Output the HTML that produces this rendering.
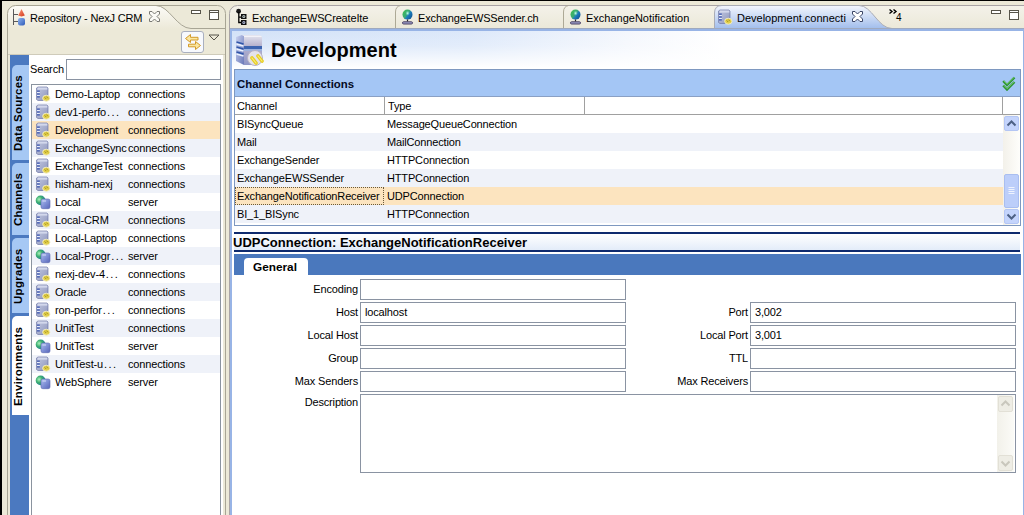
<!DOCTYPE html>
<html><head><meta charset="utf-8">
<style>
*{box-sizing:border-box;margin:0;padding:0}
html,body{width:1024px;height:515px;overflow:hidden;background:#ECE9D8;font-family:"Liberation Sans",sans-serif;font-size:11px;color:#000}
.a{position:absolute}
.t{position:absolute;white-space:nowrap;line-height:13px;letter-spacing:-0.15px}
.b{font-weight:bold}
.inp{position:absolute;border:1px solid #8A93A2;background:#fff;height:21px}
.lbl{position:absolute;white-space:nowrap;line-height:13px;letter-spacing:-0.15px;text-align:right}
.vt{position:absolute;white-space:nowrap;line-height:13px;font-weight:bold;transform-origin:0 0;transform:rotate(-90deg)}
</style></head><body>
<!-- black frame -->
<div class="a" style="left:0;top:0;width:1024px;height:1px;background:#000"></div>
<div class="a" style="left:0;top:0;width:2px;height:515px;background:#000"></div>

<!-- ========== LEFT PANEL ========== -->
<svg class="a" style="left:7px;top:5px" width="219" height="510">
 <defs><linearGradient id="g1" x1="0" y1="0" x2="0" y2="1"><stop offset="0" stop-color="#FCFBF7"/><stop offset="1" stop-color="#ECE9D8"/></linearGradient></defs>
 <path d="M0.5,510 V8.5 A8,8 0 0 1 8.5,0.5 H210.5 A8,8 0 0 1 218.5,8.5 V510" fill="#ECE9D8"/>
 <path d="M1,24 V8.5 A7.5,7.5 0 0 1 8.5,1 H149 C162,1 170,23 184,23 H184 V24 Z" fill="url(#g1)"/>
 <path d="M0.5,510 V8.5 A8,8 0 0 1 8.5,0.5 H210.5 A8,8 0 0 1 218.5,8.5 V510" fill="none" stroke="#A8A595" stroke-width="1"/>
 <path d="M149,0.5 C162,0.5 170,23.5 184,23.5 H218" fill="none" stroke="#A8A595" stroke-width="1"/>
</svg>
<div class="a" style="left:8px;top:54px;width:217px;height:1px;background:#CFCBBA"></div>
<!-- view icon -->
<svg class="a" style="left:12px;top:8px" width="16" height="18">
 <defs><linearGradient id="gr" x1="0" y1="0" x2="1" y2="1"><stop offset="0" stop-color="#FF9A7A"/><stop offset="1" stop-color="#D23A1E"/></linearGradient>
 <linearGradient id="gb" x1="0" y1="0" x2="1" y2="1"><stop offset="0" stop-color="#8FB4F0"/><stop offset="1" stop-color="#2F5BB8"/></linearGradient></defs>
 <path d="M1.5,1 V17 M1.5,6.5 H6 M1.5,13.5 H6" stroke="#5A5A5A" stroke-width="1" fill="none"/>
 <path d="M9.5,1 L12.8,7.6 Q9.5,9.2 6.2,7.6 Z" fill="url(#gr)"/>
 <rect x="6" y="10" width="7" height="7.5" rx="2" fill="url(#gb)"/>
</svg>
<div class="t" style="left:30px;top:12px">Repository - NexJ CRM</div>
<!-- close X outline -->
<svg class="a" style="left:149px;top:11px" width="11" height="11">
 <path d="M0.5,0.5 H3 L5.5,3 L8,0.5 H10.5 V3 L8,5.5 L10.5,8 V10.5 H8 L5.5,8 L3,10.5 H0.5 V8 L3,5.5 L0.5,3 Z" fill="#FAFAF6" stroke="#7A7A74" stroke-width="1"/>
</svg>
<!-- min / max -->
<div class="a" style="left:191px;top:10px;width:10px;height:4px;border:1px solid #57544A;background:#fff"></div>
<div class="a" style="left:209px;top:10px;width:10px;height:10px;border:1px solid #57544A;background:#fff"></div><div class="a" style="left:210px;top:12px;width:8px;height:1px;background:#57544A"></div>
<!-- toolbar sync button -->
<div class="a" style="left:181px;top:31px;width:23px;height:22px;border:1px solid #A9AFBF;border-radius:3px;background:#F7F9FD"></div>
<svg class="a" style="left:181px;top:31px" width="23" height="22">
 <path d="M4.5,7.5 L9.5,3.5 V6.3 H17 V9 H9.5 V11.5 Z" fill="#FBE7A0" stroke="#D39A2A" stroke-width="1" stroke-linejoin="round"/>
 <path d="M19.5,14.5 L14.5,10.5 V13.2 H7.5 V15.8 H14.5 V18.5 Z" fill="#FBE7A0" stroke="#D39A2A" stroke-width="1" stroke-linejoin="round"/>
</svg>
<svg class="a" style="left:208px;top:34px" width="12" height="7">
 <path d="M1,1 H11 L6,6 Z" fill="none" stroke="#57544A" stroke-width="1"/>
</svg>

<!-- vertical tabs strip -->
<div class="a" style="left:10px;top:55px;width:19px;height:460px;background:#4B79C0"></div>
<div class="a" style="left:12px;top:65px;width:17px;height:95px;background:#A6C8F4;border-radius:5px 0 0 0"></div>
<div class="a" style="left:12px;top:163px;width:17px;height:72px;background:#A6C8F4;border-radius:5px 0 0 0"></div>
<div class="a" style="left:12px;top:238px;width:17px;height:75px;background:#A6C8F4;border-radius:5px 0 0 0"></div>
<div class="a" style="left:12px;top:316px;width:17px;height:99px;background:#fff;border-radius:5px 0 0 0"></div>
<div class="vt" style="left:12px;top:151px;font-size:11.5px;letter-spacing:0.2px">Data Sources</div>
<div class="vt" style="left:12px;top:226px;font-size:11.5px;letter-spacing:0.15px">Channels</div>
<div class="vt" style="left:12px;top:304px;font-size:11.5px;letter-spacing:0.3px">Upgrades</div>
<div class="vt" style="left:12px;top:406px;font-size:11.5px;letter-spacing:0.2px">Environments</div>

<!-- white content -->
<div class="a" style="left:29px;top:55px;width:194px;height:460px;background:#fff"></div>
<div class="t" style="left:30px;top:63px">Search</div>
<div class="inp" style="left:66px;top:59px;width:155px"></div>
<div class="a" style="left:31px;top:84px;width:190px;height:431px;border:1px solid #8A939F;border-bottom:none;background:#fff"></div>
<svg class="a" width="0" height="0" style="left:0;top:0"><defs><radialGradient id="gs1" cx="0.35" cy="0.4" r="0.7"><stop offset="0" stop-color="#A8F2B8"/><stop offset="0.45" stop-color="#3DAE72"/><stop offset="0.8" stop-color="#2A8C8C"/><stop offset="1" stop-color="#1E6F78"/></radialGradient><linearGradient id="gdb" x1="0" y1="0" x2="1" y2="1"><stop offset="0" stop-color="#C2C8E0"/><stop offset="0.6" stop-color="#A3AACB"/><stop offset="1" stop-color="#8088B6"/></linearGradient><linearGradient id="ggl" x1="0.1" y1="0.2" x2="0.9" y2="0.8"><stop offset="0" stop-color="#3DBA5A"/><stop offset="0.45" stop-color="#38A878"/><stop offset="0.6" stop-color="#1D7EBE"/><stop offset="1" stop-color="#125A98"/></linearGradient><radialGradient id="gglh" cx="0.5" cy="0.5" r="0.5"><stop offset="0" stop-color="#C8FFF4" stop-opacity="1"/><stop offset="1" stop-color="#80E0D0" stop-opacity="0"/></radialGradient><linearGradient id="gs2" x1="0" y1="0" x2="1" y2="1"><stop offset="0" stop-color="#B3C0F0"/><stop offset="0.5" stop-color="#7F90D6"/><stop offset="1" stop-color="#5865B8"/></linearGradient></defs></svg>
<div class="a" style="left:32px;top:85px;width:188px;height:18px;background:#fff"></div>
<svg class="a" style="left:35px;top:86px" width="16" height="16" viewBox="0 0 16 16">
<path d="M1.5,2 L3,1 H12 L13,2 V12 L11,14.5 H3 L1.5,13.5 Z" fill="url(#gdb)" stroke="#7078A8" stroke-width="0.7"/>
<path d="M3,1.6 H12.3 V3.6 H3 Z" fill="#D3D8EC"/>
<path d="M2,5.2 H4.8 M2,8 H4.8 M2,10.8 H4.8" stroke="#3A55B0" stroke-width="1.3"/>
<path d="M2,6.6 H4.8 M2,9.4 H4.8" stroke="#EEF2FF" stroke-width="1"/>
<ellipse cx="11.3" cy="12.2" rx="3.7" ry="3" fill="#E2CF4A" stroke="#F2EDC8" stroke-width="0.9"/>
<path d="M9.6,11.3 L11.2,13 M11.4,10.6 L13,12.3" stroke="#9C8A1C" stroke-width="0.9"/>
</svg>
<div class="t" style="left:55px;top:88px;">Demo-Laptop</div>
<div class="t" style="left:128px;top:88px;">connections</div>
<div class="a" style="left:32px;top:103px;width:188px;height:18px;background:#EFF2F9"></div>
<svg class="a" style="left:35px;top:104px" width="16" height="16" viewBox="0 0 16 16">
<path d="M1.5,2 L3,1 H12 L13,2 V12 L11,14.5 H3 L1.5,13.5 Z" fill="url(#gdb)" stroke="#7078A8" stroke-width="0.7"/>
<path d="M3,1.6 H12.3 V3.6 H3 Z" fill="#D3D8EC"/>
<path d="M2,5.2 H4.8 M2,8 H4.8 M2,10.8 H4.8" stroke="#3A55B0" stroke-width="1.3"/>
<path d="M2,6.6 H4.8 M2,9.4 H4.8" stroke="#EEF2FF" stroke-width="1"/>
<ellipse cx="11.3" cy="12.2" rx="3.7" ry="3" fill="#E2CF4A" stroke="#F2EDC8" stroke-width="0.9"/>
<path d="M9.6,11.3 L11.2,13 M11.4,10.6 L13,12.3" stroke="#9C8A1C" stroke-width="0.9"/>
</svg>
<div class="t" style="left:55px;top:106px;">dev1-perfo<span style="letter-spacing:1.4px;margin-left:1px">...</span></div>
<div class="t" style="left:128px;top:106px;">connections</div>
<div class="a" style="left:32px;top:121px;width:188px;height:18px;background:#FCE4BF"></div>
<svg class="a" style="left:35px;top:122px" width="16" height="16" viewBox="0 0 16 16">
<path d="M1.5,2 L3,1 H12 L13,2 V12 L11,14.5 H3 L1.5,13.5 Z" fill="url(#gdb)" stroke="#7078A8" stroke-width="0.7"/>
<path d="M3,1.6 H12.3 V3.6 H3 Z" fill="#D3D8EC"/>
<path d="M2,5.2 H4.8 M2,8 H4.8 M2,10.8 H4.8" stroke="#3A55B0" stroke-width="1.3"/>
<path d="M2,6.6 H4.8 M2,9.4 H4.8" stroke="#EEF2FF" stroke-width="1"/>
<ellipse cx="11.3" cy="12.2" rx="3.7" ry="3" fill="#E2CF4A" stroke="#F2EDC8" stroke-width="0.9"/>
<path d="M9.6,11.3 L11.2,13 M11.4,10.6 L13,12.3" stroke="#9C8A1C" stroke-width="0.9"/>
</svg>
<div class="t" style="left:55px;top:124px;">Development</div>
<div class="t" style="left:128px;top:124px;">connections</div>
<div class="a" style="left:32px;top:139px;width:188px;height:18px;background:#EFF2F9"></div>
<svg class="a" style="left:35px;top:140px" width="16" height="16" viewBox="0 0 16 16">
<path d="M1.5,2 L3,1 H12 L13,2 V12 L11,14.5 H3 L1.5,13.5 Z" fill="url(#gdb)" stroke="#7078A8" stroke-width="0.7"/>
<path d="M3,1.6 H12.3 V3.6 H3 Z" fill="#D3D8EC"/>
<path d="M2,5.2 H4.8 M2,8 H4.8 M2,10.8 H4.8" stroke="#3A55B0" stroke-width="1.3"/>
<path d="M2,6.6 H4.8 M2,9.4 H4.8" stroke="#EEF2FF" stroke-width="1"/>
<ellipse cx="11.3" cy="12.2" rx="3.7" ry="3" fill="#E2CF4A" stroke="#F2EDC8" stroke-width="0.9"/>
<path d="M9.6,11.3 L11.2,13 M11.4,10.6 L13,12.3" stroke="#9C8A1C" stroke-width="0.9"/>
</svg>
<div class="t" style="left:55px;top:142px;">ExchangeSync</div>
<div class="t" style="left:128px;top:142px;">connections</div>
<div class="a" style="left:32px;top:157px;width:188px;height:18px;background:#fff"></div>
<svg class="a" style="left:35px;top:158px" width="16" height="16" viewBox="0 0 16 16">
<path d="M1.5,2 L3,1 H12 L13,2 V12 L11,14.5 H3 L1.5,13.5 Z" fill="url(#gdb)" stroke="#7078A8" stroke-width="0.7"/>
<path d="M3,1.6 H12.3 V3.6 H3 Z" fill="#D3D8EC"/>
<path d="M2,5.2 H4.8 M2,8 H4.8 M2,10.8 H4.8" stroke="#3A55B0" stroke-width="1.3"/>
<path d="M2,6.6 H4.8 M2,9.4 H4.8" stroke="#EEF2FF" stroke-width="1"/>
<ellipse cx="11.3" cy="12.2" rx="3.7" ry="3" fill="#E2CF4A" stroke="#F2EDC8" stroke-width="0.9"/>
<path d="M9.6,11.3 L11.2,13 M11.4,10.6 L13,12.3" stroke="#9C8A1C" stroke-width="0.9"/>
</svg>
<div class="t" style="left:55px;top:160px;">ExchangeTest</div>
<div class="t" style="left:128px;top:160px;">connections</div>
<div class="a" style="left:32px;top:175px;width:188px;height:18px;background:#EFF2F9"></div>
<svg class="a" style="left:35px;top:176px" width="16" height="16" viewBox="0 0 16 16">
<path d="M1.5,2 L3,1 H12 L13,2 V12 L11,14.5 H3 L1.5,13.5 Z" fill="url(#gdb)" stroke="#7078A8" stroke-width="0.7"/>
<path d="M3,1.6 H12.3 V3.6 H3 Z" fill="#D3D8EC"/>
<path d="M2,5.2 H4.8 M2,8 H4.8 M2,10.8 H4.8" stroke="#3A55B0" stroke-width="1.3"/>
<path d="M2,6.6 H4.8 M2,9.4 H4.8" stroke="#EEF2FF" stroke-width="1"/>
<ellipse cx="11.3" cy="12.2" rx="3.7" ry="3" fill="#E2CF4A" stroke="#F2EDC8" stroke-width="0.9"/>
<path d="M9.6,11.3 L11.2,13 M11.4,10.6 L13,12.3" stroke="#9C8A1C" stroke-width="0.9"/>
</svg>
<div class="t" style="left:55px;top:178px;">hisham-nexj</div>
<div class="t" style="left:128px;top:178px;">connections</div>
<div class="a" style="left:32px;top:193px;width:188px;height:18px;background:#fff"></div>
<svg class="a" style="left:35px;top:194px" width="16" height="16" viewBox="0 0 16 16">
<circle cx="5.6" cy="6.4" r="4.9" fill="url(#gs1)"/>
<rect x="6" y="5" width="9" height="9.7" rx="1.8" fill="url(#gs2)" stroke="#5A68B0" stroke-width="0.6"/>
<path d="M7.5,7 H11" stroke="#E6ECFF" stroke-width="1" opacity="0.8"/>
</svg>
<div class="t" style="left:55px;top:196px;">Local</div>
<div class="t" style="left:128px;top:196px;">server</div>
<div class="a" style="left:32px;top:211px;width:188px;height:18px;background:#EFF2F9"></div>
<svg class="a" style="left:35px;top:212px" width="16" height="16" viewBox="0 0 16 16">
<path d="M1.5,2 L3,1 H12 L13,2 V12 L11,14.5 H3 L1.5,13.5 Z" fill="url(#gdb)" stroke="#7078A8" stroke-width="0.7"/>
<path d="M3,1.6 H12.3 V3.6 H3 Z" fill="#D3D8EC"/>
<path d="M2,5.2 H4.8 M2,8 H4.8 M2,10.8 H4.8" stroke="#3A55B0" stroke-width="1.3"/>
<path d="M2,6.6 H4.8 M2,9.4 H4.8" stroke="#EEF2FF" stroke-width="1"/>
<ellipse cx="11.3" cy="12.2" rx="3.7" ry="3" fill="#E2CF4A" stroke="#F2EDC8" stroke-width="0.9"/>
<path d="M9.6,11.3 L11.2,13 M11.4,10.6 L13,12.3" stroke="#9C8A1C" stroke-width="0.9"/>
</svg>
<div class="t" style="left:55px;top:214px;">Local-CRM</div>
<div class="t" style="left:128px;top:214px;">connections</div>
<div class="a" style="left:32px;top:229px;width:188px;height:18px;background:#fff"></div>
<svg class="a" style="left:35px;top:230px" width="16" height="16" viewBox="0 0 16 16">
<path d="M1.5,2 L3,1 H12 L13,2 V12 L11,14.5 H3 L1.5,13.5 Z" fill="url(#gdb)" stroke="#7078A8" stroke-width="0.7"/>
<path d="M3,1.6 H12.3 V3.6 H3 Z" fill="#D3D8EC"/>
<path d="M2,5.2 H4.8 M2,8 H4.8 M2,10.8 H4.8" stroke="#3A55B0" stroke-width="1.3"/>
<path d="M2,6.6 H4.8 M2,9.4 H4.8" stroke="#EEF2FF" stroke-width="1"/>
<ellipse cx="11.3" cy="12.2" rx="3.7" ry="3" fill="#E2CF4A" stroke="#F2EDC8" stroke-width="0.9"/>
<path d="M9.6,11.3 L11.2,13 M11.4,10.6 L13,12.3" stroke="#9C8A1C" stroke-width="0.9"/>
</svg>
<div class="t" style="left:55px;top:232px;">Local-Laptop</div>
<div class="t" style="left:128px;top:232px;">connections</div>
<div class="a" style="left:32px;top:247px;width:188px;height:18px;background:#EFF2F9"></div>
<svg class="a" style="left:35px;top:248px" width="16" height="16" viewBox="0 0 16 16">
<circle cx="5.6" cy="6.4" r="4.9" fill="url(#gs1)"/>
<rect x="6" y="5" width="9" height="9.7" rx="1.8" fill="url(#gs2)" stroke="#5A68B0" stroke-width="0.6"/>
<path d="M7.5,7 H11" stroke="#E6ECFF" stroke-width="1" opacity="0.8"/>
</svg>
<div class="t" style="left:55px;top:250px;">Local-Progr<span style="letter-spacing:1.4px;margin-left:1px">...</span></div>
<div class="t" style="left:128px;top:250px;">server</div>
<div class="a" style="left:32px;top:265px;width:188px;height:18px;background:#fff"></div>
<svg class="a" style="left:35px;top:266px" width="16" height="16" viewBox="0 0 16 16">
<path d="M1.5,2 L3,1 H12 L13,2 V12 L11,14.5 H3 L1.5,13.5 Z" fill="url(#gdb)" stroke="#7078A8" stroke-width="0.7"/>
<path d="M3,1.6 H12.3 V3.6 H3 Z" fill="#D3D8EC"/>
<path d="M2,5.2 H4.8 M2,8 H4.8 M2,10.8 H4.8" stroke="#3A55B0" stroke-width="1.3"/>
<path d="M2,6.6 H4.8 M2,9.4 H4.8" stroke="#EEF2FF" stroke-width="1"/>
<ellipse cx="11.3" cy="12.2" rx="3.7" ry="3" fill="#E2CF4A" stroke="#F2EDC8" stroke-width="0.9"/>
<path d="M9.6,11.3 L11.2,13 M11.4,10.6 L13,12.3" stroke="#9C8A1C" stroke-width="0.9"/>
</svg>
<div class="t" style="left:55px;top:268px;">nexj-dev-4<span style="letter-spacing:1.4px;margin-left:1px">...</span></div>
<div class="t" style="left:128px;top:268px;">connections</div>
<div class="a" style="left:32px;top:283px;width:188px;height:18px;background:#EFF2F9"></div>
<svg class="a" style="left:35px;top:284px" width="16" height="16" viewBox="0 0 16 16">
<path d="M1.5,2 L3,1 H12 L13,2 V12 L11,14.5 H3 L1.5,13.5 Z" fill="url(#gdb)" stroke="#7078A8" stroke-width="0.7"/>
<path d="M3,1.6 H12.3 V3.6 H3 Z" fill="#D3D8EC"/>
<path d="M2,5.2 H4.8 M2,8 H4.8 M2,10.8 H4.8" stroke="#3A55B0" stroke-width="1.3"/>
<path d="M2,6.6 H4.8 M2,9.4 H4.8" stroke="#EEF2FF" stroke-width="1"/>
<ellipse cx="11.3" cy="12.2" rx="3.7" ry="3" fill="#E2CF4A" stroke="#F2EDC8" stroke-width="0.9"/>
<path d="M9.6,11.3 L11.2,13 M11.4,10.6 L13,12.3" stroke="#9C8A1C" stroke-width="0.9"/>
</svg>
<div class="t" style="left:55px;top:286px;">Oracle</div>
<div class="t" style="left:128px;top:286px;">connections</div>
<div class="a" style="left:32px;top:301px;width:188px;height:18px;background:#fff"></div>
<svg class="a" style="left:35px;top:302px" width="16" height="16" viewBox="0 0 16 16">
<path d="M1.5,2 L3,1 H12 L13,2 V12 L11,14.5 H3 L1.5,13.5 Z" fill="url(#gdb)" stroke="#7078A8" stroke-width="0.7"/>
<path d="M3,1.6 H12.3 V3.6 H3 Z" fill="#D3D8EC"/>
<path d="M2,5.2 H4.8 M2,8 H4.8 M2,10.8 H4.8" stroke="#3A55B0" stroke-width="1.3"/>
<path d="M2,6.6 H4.8 M2,9.4 H4.8" stroke="#EEF2FF" stroke-width="1"/>
<ellipse cx="11.3" cy="12.2" rx="3.7" ry="3" fill="#E2CF4A" stroke="#F2EDC8" stroke-width="0.9"/>
<path d="M9.6,11.3 L11.2,13 M11.4,10.6 L13,12.3" stroke="#9C8A1C" stroke-width="0.9"/>
</svg>
<div class="t" style="left:55px;top:304px;">ron-perfor<span style="letter-spacing:1.4px;margin-left:1px">...</span></div>
<div class="t" style="left:128px;top:304px;">connections</div>
<div class="a" style="left:32px;top:319px;width:188px;height:18px;background:#EFF2F9"></div>
<svg class="a" style="left:35px;top:320px" width="16" height="16" viewBox="0 0 16 16">
<path d="M1.5,2 L3,1 H12 L13,2 V12 L11,14.5 H3 L1.5,13.5 Z" fill="url(#gdb)" stroke="#7078A8" stroke-width="0.7"/>
<path d="M3,1.6 H12.3 V3.6 H3 Z" fill="#D3D8EC"/>
<path d="M2,5.2 H4.8 M2,8 H4.8 M2,10.8 H4.8" stroke="#3A55B0" stroke-width="1.3"/>
<path d="M2,6.6 H4.8 M2,9.4 H4.8" stroke="#EEF2FF" stroke-width="1"/>
<ellipse cx="11.3" cy="12.2" rx="3.7" ry="3" fill="#E2CF4A" stroke="#F2EDC8" stroke-width="0.9"/>
<path d="M9.6,11.3 L11.2,13 M11.4,10.6 L13,12.3" stroke="#9C8A1C" stroke-width="0.9"/>
</svg>
<div class="t" style="left:55px;top:322px;">UnitTest</div>
<div class="t" style="left:128px;top:322px;">connections</div>
<div class="a" style="left:32px;top:337px;width:188px;height:18px;background:#fff"></div>
<svg class="a" style="left:35px;top:338px" width="16" height="16" viewBox="0 0 16 16">
<circle cx="5.6" cy="6.4" r="4.9" fill="url(#gs1)"/>
<rect x="6" y="5" width="9" height="9.7" rx="1.8" fill="url(#gs2)" stroke="#5A68B0" stroke-width="0.6"/>
<path d="M7.5,7 H11" stroke="#E6ECFF" stroke-width="1" opacity="0.8"/>
</svg>
<div class="t" style="left:55px;top:340px;">UnitTest</div>
<div class="t" style="left:128px;top:340px;">server</div>
<div class="a" style="left:32px;top:355px;width:188px;height:18px;background:#EFF2F9"></div>
<svg class="a" style="left:35px;top:356px" width="16" height="16" viewBox="0 0 16 16">
<path d="M1.5,2 L3,1 H12 L13,2 V12 L11,14.5 H3 L1.5,13.5 Z" fill="url(#gdb)" stroke="#7078A8" stroke-width="0.7"/>
<path d="M3,1.6 H12.3 V3.6 H3 Z" fill="#D3D8EC"/>
<path d="M2,5.2 H4.8 M2,8 H4.8 M2,10.8 H4.8" stroke="#3A55B0" stroke-width="1.3"/>
<path d="M2,6.6 H4.8 M2,9.4 H4.8" stroke="#EEF2FF" stroke-width="1"/>
<ellipse cx="11.3" cy="12.2" rx="3.7" ry="3" fill="#E2CF4A" stroke="#F2EDC8" stroke-width="0.9"/>
<path d="M9.6,11.3 L11.2,13 M11.4,10.6 L13,12.3" stroke="#9C8A1C" stroke-width="0.9"/>
</svg>
<div class="t" style="left:55px;top:358px;">UnitTest-u<span style="letter-spacing:1.4px;margin-left:1px">...</span></div>
<div class="t" style="left:128px;top:358px;">connections</div>
<div class="a" style="left:32px;top:373px;width:188px;height:18px;background:#fff"></div>
<svg class="a" style="left:35px;top:374px" width="16" height="16" viewBox="0 0 16 16">
<circle cx="5.6" cy="6.4" r="4.9" fill="url(#gs1)"/>
<rect x="6" y="5" width="9" height="9.7" rx="1.8" fill="url(#gs2)" stroke="#5A68B0" stroke-width="0.6"/>
<path d="M7.5,7 H11" stroke="#E6ECFF" stroke-width="1" opacity="0.8"/>
</svg>
<div class="t" style="left:55px;top:376px;">WebSphere</div>
<div class="t" style="left:128px;top:376px;">server</div>


<!-- ========== EDITOR PANEL ========== -->
<svg class="a" style="left:229px;top:5px" width="795" height="510">
 <defs>
  <linearGradient id="g0" x1="0" y1="0" x2="0" y2="24" gradientUnits="userSpaceOnUse"><stop offset="0" stop-color="#F4F2EA"/><stop offset="1" stop-color="#EBE8D8"/></linearGradient>
 </defs>
 <path d="M0.5,510 V8.5 A8,8 0 0 1 8.5,0.5 H796 V510 Z" fill="url(#g0)" stroke="#A9A4A6" stroke-width="1"/>
</svg>
<svg class="a" style="left:395px;top:5px" width="8" height="24"><path d="M0.5,24 V7 Q0.5,1.5 5.5,0.5" fill="none" stroke="#ADA996" stroke-width="1"/></svg>
<svg class="a" style="left:563px;top:5px" width="8" height="24"><path d="M0.5,24 V7 Q0.5,1.5 5.5,0.5" fill="none" stroke="#ADA996" stroke-width="1"/></svg>
<div class="t" style="left:252px;top:12px;">ExchangeEWSCreateIte</div>
<div class="t" style="left:418px;top:12px;">ExchangeEWSSender.ch</div>
<div class="t" style="left:586px;top:12px;letter-spacing:0">ExchangeNotification</div>
<svg class="a" style="left:714px;top:5px" width="190" height="24">
<defs><linearGradient id="g2" x1="0" y1="0" x2="0" y2="1"><stop offset="0" stop-color="#F4F6FD"/><stop offset="0.35" stop-color="#D6E2F7"/><stop offset="1" stop-color="#A0BCEC"/></linearGradient></defs>
<path d="M0.5,24 V8 Q0.5,0.5 8,0.5 L145,0.5 C158,0.5 164,23.5 178,23.5 L190,23.5 V24 Z" fill="url(#g2)"/>
<path d="M0.5,24 V8 Q0.5,0.5 8,0.5 L145,0.5 C158,0.5 164,23.5 178,23.5 L190,23.5" fill="none" stroke="#A9ACB6" stroke-width="1"/>
</svg>
<div class="t" style="left:737px;top:12px;letter-spacing:0">Development.connecti</div>
<svg class="a" style="left:852px;top:11px" width="11" height="11">
<path d="M0.5,0.5 H3 L5.5,3 L8,0.5 H10.5 V3 L8,5.5 L10.5,8 V10.5 H8 L5.5,8 L3,10.5 H0.5 V8 L3,5.5 L0.5,3 Z" fill="#fff" stroke="#3A4566" stroke-width="1"/>
</svg>
<svg class="a" style="left:889px;top:9px" width="9" height="6"><path d="M0.5,0.5 L3,2.5 L0.5,4.5 M4.5,0.5 L7,2.5 L4.5,4.5" stroke="#000" stroke-width="1.4" fill="none"/></svg>
<div class="t" style="left:896px;top:11px;letter-spacing:0;font-size:10px">4</div>
<div class="a" style="left:991px;top:10px;width:10px;height:4px;border:1px solid #57544A;background:#fff"></div>
<div class="a" style="left:1009px;top:10px;width:10px;height:10px;border:1px solid #57544A;background:#fff"></div><div class="a" style="left:1010px;top:12px;width:8px;height:1px;background:#57544A"></div>
<svg class="a" style="left:235px;top:8px" width="14" height="18">
<circle cx="3.6" cy="3.2" r="2.4" fill="#1A1A1A"/>
<path d="M3.8,4 V14.5 H6.5 M3.8,9.2 H6.5" stroke="#000" stroke-width="1.3" fill="none"/>
<rect x="6" y="6" width="5.5" height="5" fill="#111"/><rect x="6" y="12" width="5.5" height="5" fill="#111"/>
<circle cx="8.8" cy="8.5" r="1.5" fill="#B9C6C4"/><circle cx="8.8" cy="14.5" r="1.5" fill="#AEB8D6"/>
<circle cx="8.8" cy="8.5" r="0.6" fill="#333"/><circle cx="8.8" cy="14.5" r="0.6" fill="#333"/>
</svg>
<svg class="a" style="left:401px;top:9px" width="13" height="16" viewBox="0 0 13 16">
<circle cx="6.5" cy="5.6" r="5" fill="url(#ggl)"/><ellipse cx="6.6" cy="4.2" rx="2.2" ry="2.6" fill="url(#gglh)"/>
<path d="M6.5,10.5 V12.5" stroke="#222" stroke-width="1.2"/>
<rect x="1.5" y="12.8" width="10" height="2.2" rx="1.1" fill="#A3A6D0" stroke="#3A2F55" stroke-width="0.9"/>
</svg>
<svg class="a" style="left:569px;top:9px" width="13" height="16" viewBox="0 0 13 16">
<circle cx="6.5" cy="5.6" r="5" fill="url(#ggl)"/><ellipse cx="6.6" cy="4.2" rx="2.2" ry="2.6" fill="url(#gglh)"/>
<path d="M6.5,10.5 V12.5" stroke="#222" stroke-width="1.2"/>
<rect x="1.5" y="12.8" width="10" height="2.2" rx="1.1" fill="#A3A6D0" stroke="#3A2F55" stroke-width="0.9"/>
</svg>
<svg class="a" style="left:717px;top:9px" width="16" height="16" viewBox="0 0 16 16">
<path d="M1.5,2 L3,1 H12 L13,2 V12 L11,14.5 H3 L1.5,13.5 Z" fill="url(#gdb)" stroke="#7078A8" stroke-width="0.7"/>
<path d="M3,1.6 H12.3 V3.6 H3 Z" fill="#D3D8EC"/>
<path d="M2,5.2 H4.8 M2,8 H4.8 M2,10.8 H4.8" stroke="#3A55B0" stroke-width="1.3"/>
<path d="M2,6.6 H4.8 M2,9.4 H4.8" stroke="#EEF2FF" stroke-width="1"/>
<ellipse cx="11.3" cy="12.2" rx="3.7" ry="3" fill="#E2CF4A" stroke="#F2EDC8" stroke-width="0.9"/>
<path d="M9.6,11.3 L11.2,13 M11.4,10.6 L13,12.3" stroke="#9C8A1C" stroke-width="0.9"/>
</svg>

<!-- blue content frame -->
<div class="a" style="left:230px;top:28px;width:794px;height:1px;background:#9FA9BE"></div>
<div class="a" style="left:230px;top:29px;width:794px;height:486px;background:#98B4E6"></div>
<div class="a" style="left:232px;top:31px;width:791px;height:484px;background:#fff"></div>
<!-- header gradient -->
<div class="a" style="left:232px;top:31px;width:791px;height:37px;background:linear-gradient(to bottom,rgba(255,255,255,0) 0%,rgba(255,255,255,0.2) 40%,#fff 100%),linear-gradient(to right,#D3E2F8 0%,#DCE8FA 30%,#F4F7FD 50%,#fff 62%)"></div>
<svg class="a" style="left:232px;top:32px" width="36" height="36" viewBox="0 0 36 36">
<defs>
<linearGradient id="g3" x1="0" y1="0" x2="0" y2="1"><stop offset="0" stop-color="#E6E6F0"/><stop offset="0.35" stop-color="#B8B4CF"/><stop offset="1" stop-color="#8F96C6"/></linearGradient>
<linearGradient id="g4" x1="0" y1="0" x2="1" y2="1"><stop offset="0" stop-color="#C9D2F0"/><stop offset="1" stop-color="#6A78B8"/></linearGradient>
</defs>
<path d="M4,5 L10,3 L12,4 V33 L4,29 Z" fill="url(#g4)"/>
<path d="M10,3 H28 L30,5 V26 L20,33 H12 V4 Z" fill="url(#g3)"/>
<path d="M12,4 H29 L30,5 H12 Z" fill="#F2F2F8"/>
<path d="M12,14 H30 V17 H12 Z" fill="#3D64B0"/>
<path d="M12,17 H30 V19 H12 Z" fill="#9DB2DE"/>
<path d="M4.5,12 L11.5,14 M4.5,17 L11.5,19 M4.5,22 L11.5,24" stroke="#EAF2FF" stroke-width="1.6"/>
<path d="M4.5,10 L11.5,12 M4.5,15 L11.5,17 M4.5,20 L11.5,22" stroke="#3056A8" stroke-width="1.6"/>
<circle cx="23" cy="26" r="7.5" fill="#E4E2EA" stroke="#B8B3C6" stroke-width="1"/>
<path d="M20,26 L24,31 M26,24 L30,29" stroke="#E7CC22" stroke-width="3.6" stroke-linecap="round"/>
<path d="M20,26 L24,31 M26,24 L30,29" stroke="#F7EC7A" stroke-width="1.2" stroke-linecap="round"/>
</svg>
<div class="t b" style="left:271px;top:38px;font-size:20px;line-height:24px;letter-spacing:0">Development</div>

<!-- section -->
<div class="a" style="left:234px;top:69px;width:787px;height:157px;border:1px solid #7E98C0;background:#fff"></div>
<div class="a" style="left:235px;top:70px;width:785px;height:26px;background:#A4C6F5"></div>
<div class="a" style="left:235px;top:96px;width:785px;height:1px;background:#8AA0C4"></div>
<div class="t b" style="left:237px;top:78px;font-size:11.4px;letter-spacing:0;color:#050A24">Channel Connections</div>
<div class="a" style="left:384px;top:97px;width:1px;height:17px;background:#A0A0A0"></div>
<div class="a" style="left:584px;top:97px;width:1px;height:17px;background:#A0A0A0"></div>
<div class="a" style="left:1002px;top:97px;width:1px;height:17px;background:#A0A0A0"></div>
<div class="a" style="left:235px;top:114px;width:785px;height:1px;background:#A0A0A0"></div>
<div class="t" style="left:237px;top:100px;">Channel</div>
<div class="t" style="left:388px;top:100px;">Type</div>
<div class="a" style="left:235px;top:115px;width:768px;height:18px;background:#fff"></div>
<div class="t" style="left:237px;top:118px;">BISyncQueue</div>
<div class="t" style="left:387px;top:118px;">MessageQueueConnection</div>
<div class="a" style="left:235px;top:133px;width:768px;height:18px;background:#EFF2F9"></div>
<div class="t" style="left:237px;top:136px;">Mail</div>
<div class="t" style="left:387px;top:136px;">MailConnection</div>
<div class="a" style="left:235px;top:151px;width:768px;height:18px;background:#fff"></div>
<div class="t" style="left:237px;top:154px;">ExchangeSender</div>
<div class="t" style="left:387px;top:154px;">HTTPConnection</div>
<div class="a" style="left:235px;top:169px;width:768px;height:18px;background:#EFF2F9"></div>
<div class="t" style="left:237px;top:172px;">ExchangeEWSSender</div>
<div class="t" style="left:387px;top:172px;">HTTPConnection</div>
<div class="a" style="left:235px;top:187px;width:768px;height:18px;background:#FCE4BF"></div>
<div class="t" style="left:237px;top:190px;">ExchangeNotificationReceiver</div>
<div class="t" style="left:387px;top:190px;">UDPConnection</div>
<div class="a" style="left:235px;top:205px;width:768px;height:18px;background:#EFF2F9"></div>
<div class="t" style="left:237px;top:208px;">BI_1_BISync</div>
<div class="t" style="left:387px;top:208px;">HTTPConnection</div>
<div class="a" style="left:235px;top:187px;width:149px;height:18px;border:1px dotted #6A5A3A"></div>
<div class="a" style="left:1003px;top:115px;width:17px;height:110px;background:linear-gradient(90deg,#F3F1EA,#FEFEFB)"></div>
<div class="a" style="left:1004px;top:116px;width:15px;height:15px;background:#C4D4FC;border:1px solid #B4C6F4;border-radius:2px"></div>
<svg class="a" style="left:1004px;top:116px" width="15" height="15"><path d="M3.5,9.5 L7.5,5.5 L11.5,9.5" stroke="#4D6185" stroke-width="2" fill="none"/></svg>
<div class="a" style="left:1004px;top:174px;width:15px;height:34px;background:#BCCEFA;border:1px solid #A9BEF0;border-radius:2px"></div>
<svg class="a" style="left:1004px;top:174px" width="15" height="34"><path d="M4.5,13.5 H10.5 M4.5,15.5 H10.5 M4.5,17.5 H10.5 M4.5,19.5 H10.5" stroke="#EEF3FE" stroke-width="1"/></svg>
<div class="a" style="left:1004px;top:209px;width:15px;height:15px;background:#C4D4FC;border:1px solid #B4C6F4;border-radius:2px"></div>
<svg class="a" style="left:1004px;top:209px" width="15" height="15"><path d="M3.5,5.5 L7.5,9.5 L11.5,5.5" stroke="#4D6185" stroke-width="2" fill="none"/></svg>
<svg class="a" style="left:1002px;top:75px" width="15" height="16"><path d="M1.2,6 L5,10 L12.5,2.5" stroke="#2E9435" stroke-width="2.4" fill="none"/><path d="M1.2,10.5 L5,14.5 L12.5,7" stroke="#2E9435" stroke-width="2.4" fill="none"/><path d="M1.8,5.8 L5,9.2 L12,2.4" stroke="#8BE07E" stroke-width="0.7" fill="none"/><path d="M1.8,10.3 L5,13.7 L12,6.9" stroke="#8BE07E" stroke-width="0.7" fill="none"/></svg>


<!-- detail title -->
<div class="a" style="left:234px;top:232px;width:786px;height:2px;background:#0E2A6E"></div>
<div class="a" style="left:234px;top:234px;width:786px;height:16px;background:linear-gradient(#fff,#E3ECF9)"></div>
<div class="a" style="left:234px;top:250px;width:786px;height:2px;background:#0E2A6E"></div>
<div class="t b" style="left:233px;top:235px;font-size:13px;line-height:15px;letter-spacing:0">UDPConnection: ExchangeNotificationReceiver</div>
<!-- tab bar -->
<div class="a" style="left:234px;top:254px;width:787px;height:21px;background:#4A78BD"></div>
<div class="a" style="left:244px;top:258px;width:64px;height:17px;background:#fff;border-radius:4px 4px 0 0"></div>
<div class="t b" style="left:253px;top:261px;font-size:11.8px;letter-spacing:0">General</div>
<div class="lbl" style="left:201px;width:157px;top:283px">Encoding</div>
<div class="inp" style="left:360px;top:279px;width:266px"></div>
<div class="lbl" style="left:201px;width:157px;top:306px">Host</div>
<div class="inp" style="left:360px;top:302px;width:266px"></div>
<div class="t" style="left:365px;top:306px;">localhost</div>
<div class="lbl" style="left:591px;width:157px;top:306px">Port</div>
<div class="inp" style="left:750px;top:302px;width:266px"></div>
<div class="t" style="left:755px;top:306px;">3,002</div>
<div class="lbl" style="left:201px;width:157px;top:329px">Local Host</div>
<div class="inp" style="left:360px;top:325px;width:266px"></div>
<div class="lbl" style="left:591px;width:157px;top:329px">Local Port</div>
<div class="inp" style="left:750px;top:325px;width:266px"></div>
<div class="t" style="left:755px;top:329px;">3,001</div>
<div class="lbl" style="left:201px;width:157px;top:352px">Group</div>
<div class="inp" style="left:360px;top:348px;width:266px"></div>
<div class="lbl" style="left:591px;width:157px;top:352px">TTL</div>
<div class="inp" style="left:750px;top:348px;width:266px"></div>
<div class="lbl" style="left:201px;width:157px;top:375px">Max Senders</div>
<div class="inp" style="left:360px;top:371px;width:266px"></div>
<div class="lbl" style="left:591px;width:157px;top:375px">Max Receivers</div>
<div class="inp" style="left:750px;top:371px;width:266px"></div>
<div class="lbl" style="left:201px;width:157px;top:396px">Description</div>
<div class="inp" style="left:360px;top:394px;width:656px;height:79px"></div>
<div class="a" style="left:997px;top:395px;width:17px;height:77px;background:linear-gradient(90deg,#F2F1EA,#FBFBF7)"></div>
<div class="a" style="left:998px;top:396px;width:15px;height:16px;background:#EEEDE5;border:1px solid #E2E0D6;border-radius:2px"></div>
<svg class="a" style="left:998px;top:396px" width="15" height="16"><path d="M3.5,9.5 L7.5,5.5 L11.5,9.5" stroke="#C9C7BD" stroke-width="2" fill="none"/></svg>
<div class="a" style="left:998px;top:455px;width:15px;height:16px;background:#EEEDE5;border:1px solid #E2E0D6;border-radius:2px"></div>
<svg class="a" style="left:998px;top:455px" width="15" height="16"><path d="M3.5,6.5 L7.5,10.5 L11.5,6.5" stroke="#C9C7BD" stroke-width="2" fill="none"/></svg>

</body></html>
